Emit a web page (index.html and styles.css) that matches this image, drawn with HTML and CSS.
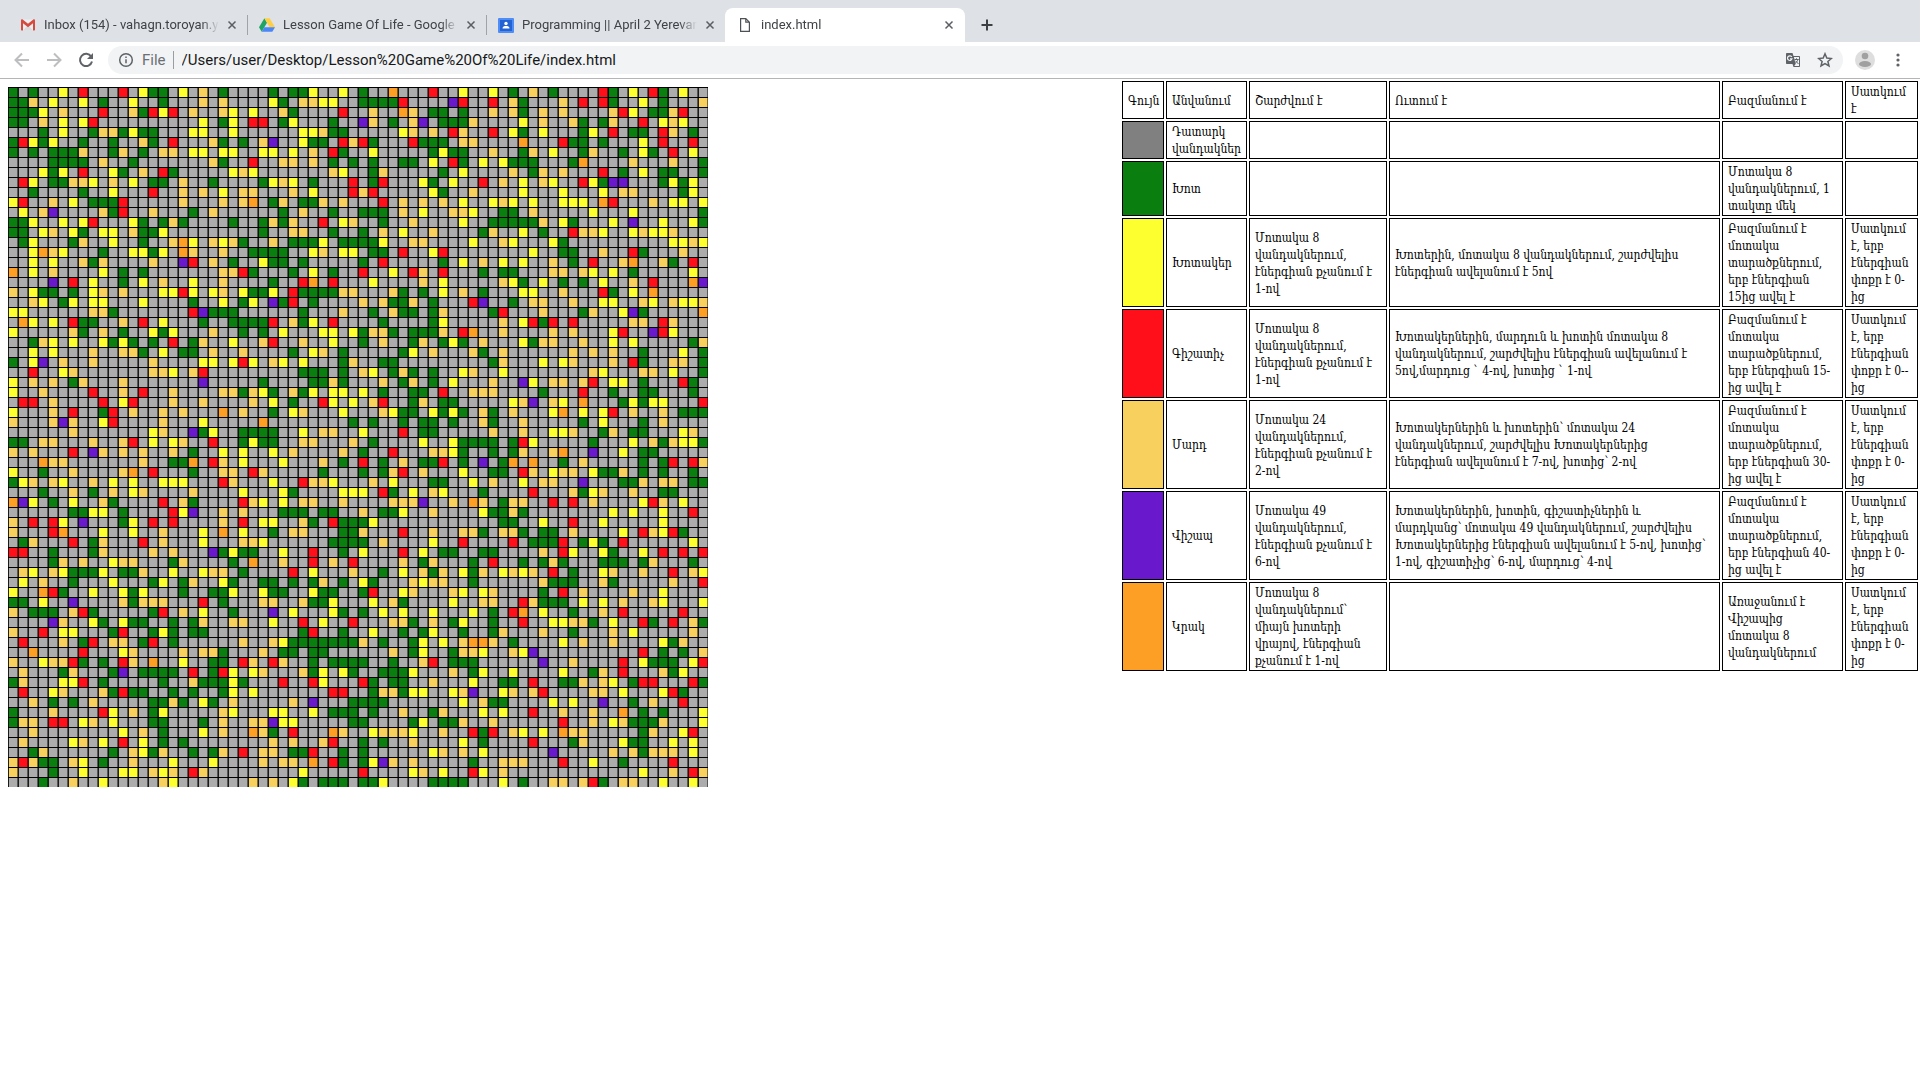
FILE: index.html
```html
<!DOCTYPE html>
<html lang="hy">
<head>
<meta charset="utf-8">
<title>index.html</title>
<link rel="stylesheet" href="styles.css">
</head>
<body>
<header class="browser">
  <nav class="tabs" aria-label="Tabs">
    <div class="tab">
      <svg class="favicon" viewBox="0 0 16 16" aria-hidden="true"><path fill="#eceff1" d="M2 2.500h12v11H2z"/><path fill="#d9dbdd" d="M3 13.500 8 8l5 5.500z"/><path fill="#d54b3d" d="M1 3.500C1 2.500 2 2 3 2.700L8 6.800l5-4.100c1-.7 2-.2 2 .8v9c0 .6-.4 1-1 1h-1V6.200L8 10.200 3 6.200v7.300H2c-.6 0-1-.4-1-1z"/></svg>
      <button class="tab-title" type="button">Inbox (154) - vahagn.toroyan.y@gmail.com</button>
      <button class="close" type="button" aria-label="Close tab"><svg viewBox="0 0 10 10"><path d="m1.500 1.500 7 7m0-7-7 7"/></svg></button>
    </div>
    <div class="tab">
      <svg class="favicon" viewBox="0 0 16 16" aria-hidden="true"><path fill="#1fa463" d="M5.400 1.300 0 10.300l2.700 4.500 5.300-9z"/><path fill="#ffce43" d="M5.400 1.300h5.200l5.400 9h-5.300z"/><path fill="#4a86f5" d="M5.400 10.300H16l-2.700 4.500H2.700z"/></svg>
      <button class="tab-title" type="button">Lesson Game Of Life - Google Drive</button>
      <button class="close" type="button" aria-label="Close tab"><svg viewBox="0 0 10 10"><path d="m1.500 1.500 7 7m0-7-7 7"/></svg></button>
    </div>
    <div class="tab">
      <svg class="favicon" viewBox="0 0 16 16" aria-hidden="true"><rect y="1" width="16" height="15" rx="1" fill="#4f8df6"/><rect x="2" y="3" width="12" height="11" fill="#2362d2"/><circle cx="8" cy="6.500" r="1.700" fill="#fff"/><path fill="#fff" d="M4.500 11.500c0-2 1.700-2.500 3.500-2.500s3.500.5 3.500 2.500z"/></svg>
      <button class="tab-title" type="button">Programming || April 2 Yerevan Group</button>
      <button class="close" type="button" aria-label="Close tab"><svg viewBox="0 0 10 10"><path d="m1.500 1.500 7 7m0-7-7 7"/></svg></button>
    </div>
    <div class="tab active">
      <svg class="favicon" viewBox="0 0 16 16" aria-hidden="true"><path fill="none" stroke="#4d5054" stroke-width="1.200" d="M3.600 1.600h5.200l3.600 3.600v9.200H3.600zM8.800 1.600v3.600h3.600"/></svg>
      <button class="tab-title" type="button">index.html</button>
      <button class="close" type="button" aria-label="Close tab"><svg viewBox="0 0 10 10"><path d="m1.500 1.500 7 7m0-7-7 7"/></svg></button>
    </div>
    <button class="new-tab" type="button" aria-label="New tab"><svg viewBox="0 0 12 12"><path d="M6 .5v11M.5 6h11"/></svg></button>
  </nav>
  <div class="toolbar">
    <button class="tool dim" type="button" aria-label="Back"><svg viewBox="0 0 16 16"><path d="M15 8H2M8 1.500 1.500 8 8 14.500"/></svg></button>
    <button class="tool dim" type="button" aria-label="Forward"><svg viewBox="0 0 16 16"><path d="M1 8h13M8 1.500 14.500 8 8 14.500"/></svg></button>
    <button class="tool" type="button" aria-label="Reload"><svg viewBox="0 0 16 16"><path d="M13.200 4.600A6.100 6.100 0 1 0 14 9.500"/><path class="solid" d="M15 1v6H9z"/></svg></button>
    <div class="omnibox">
      <svg class="info" viewBox="0 0 16 16" aria-hidden="true"><circle cx="8" cy="8" r="6.300"/><path d="M8 7.200v4M8 4.400v1.500"/></svg>
      <label class="scheme" for="address">File</label>
      <input class="address" id="address" type="text" value="/Users/user/Desktop/Lesson%20Game%20Of%20Life/index.html">
      <button class="tool" type="button" aria-label="Translate"><svg viewBox="0 0 16 16"><path class="solid" d="M2 1h5.500l1 3H14c.6 0 1 .4 1 1v9c0 .6-.4 1-1 1H8.500l-1-3H2c-.6 0-1-.4-1-1V2c0-.6.400-1 1-1z"/><path fill="#f1f3f4" stroke="none" d="M8.900 5H14v9H9.300l1.300-2z"/><path stroke="#f1f3f4" stroke-width="1.200" d="M6.800 5A2.300 2.300 0 1 0 7 6.900H5"/><path stroke-width="1" d="M9.500 7.500h4.200M11.500 6.300v1.200M12.900 7.500c-.4 1.700-1.500 2.800-2.700 3.800M10.500 8.800l3 3.200"/></svg></button>
      <button class="tool" type="button" aria-label="Bookmark this page"><svg viewBox="0 0 16 16"><path stroke-width="1.500" d="m8 1.800 1.800 4.300 4.600.4-3.500 3 1.100 4.500-4-2.400L4 14l1.100-4.500-3.500-3 4.600-.4z"/></svg></button>
    </div>
    <button class="avatar" type="button" aria-label="Profile"><svg viewBox="0 0 20 20"><circle cx="10" cy="10" r="10" fill="#dedede"/><circle cx="10" cy="6" r="3.300" fill="#a0a0a0"/><ellipse cx="10" cy="14" rx="6" ry="3" fill="#a0a0a0"/></svg></button>
    <button class="tool" type="button" aria-label="Menu"><svg viewBox="0 0 16 16"><circle class="solid" cx="8" cy="3" r="1.600"/><circle class="solid" cx="8" cy="8" r="1.600"/><circle class="solid" cx="8" cy="13" r="1.600"/></svg></button>
  </div>
</header>
<main class="page">
  <canvas class="field" id="field" width="700" height="700"></canvas>
  <table class="legend">
    <colgroup><col class="c-color"><col class="c-name"><col class="c-move"><col class="c-eat"><col class="c-breed"><col class="c-die"></colgroup>
    <tr><td>Գույն</td><td>Անվանում</td><td>Շարժվում է</td><td>Ուտում է</td><td>Բազմանում է</td><td>Սատկում<br>է</td></tr>
    <tr><td class="empty"></td><td>Դատարկ<br>վանդակներ</td><td></td><td></td><td></td><td></td></tr>
    <tr><td class="grass"></td><td>Խոտ</td><td></td><td></td><td>Մոտակա 8<br>վանդակներում, 1<br>տակտը մեկ</td><td></td></tr>
    <tr><td class="eater"></td><td>Խոտակեր</td><td>Մոտակա 8<br>վանդակներում,<br>էներգիան քչանում է<br>1-ով</td><td>Խոտերին, մոտակա 8 վանդակներում, շարժվելիս<br>էներգիան ավելանում է 5ով</td><td>Բազմանում է<br>մոտակա<br>տարածքներում,<br>երբ էներգիան<br>15ից ավել է</td><td>Սատկում<br>է, երբ<br>էներգիան<br>փոքր է 0-<br>ից</td></tr>
    <tr><td class="predator"></td><td>Գիշատիչ</td><td>Մոտակա 8<br>վանդակներում,<br>էներգիան քչանում է<br>1-ով</td><td>Խոտակերներին, մարդուն և խոտին մոտակա 8<br>վանդակներում, շարժվելիս էներգիան ավելանում է<br>5ով,մարդուց ` 4-ով, խոտից ` 1-ով</td><td>Բազմանում է<br>մոտակա<br>տարածքներում,<br>երբ էներգիան 15-<br>ից ավել է</td><td>Սատկում<br>է, երբ<br>էներգիան<br>փոքր է 0--<br>ից</td></tr>
    <tr><td class="human"></td><td>Մարդ</td><td>Մոտակա 24<br>վանդակներում,<br>էներգիան քչանում է<br>2-ով</td><td>Խոտակերներին և խոտերին՝ մոտակա 24<br>վանդակներում, շարժվելիս Խոտակերներից<br>էներգիան ավելանում է 7-ով, խոտից՝ 2-ով</td><td>Բազմանում է<br>մոտակա<br>տարածքներում,<br>երբ էներգիան 30-<br>ից ավել է</td><td>Սատկում<br>է, երբ<br>էներգիան<br>փոքր է 0-<br>ից</td></tr>
    <tr><td class="dragon"></td><td>Վիշապ</td><td>Մոտակա 49<br>վանդակներում,<br>էներգիան քչանում է<br>6-ով</td><td>Խոտակերներին, խոտին, գիշատիչներին և<br>մարդկանց՝ մոտակա 49 վանդակներում, շարժվելիս<br>Խոտակերներից էներգիան ավելանում է 5-ով, խոտից՝<br>1-ով, գիշատիչից՝ 6-ով, մարդուց՝ 4-ով</td><td>Բազմանում է<br>մոտակա<br>տարածքներում,<br>երբ էներգիան 40-<br>ից ավել է</td><td>Սատկում<br>է, երբ<br>էներգիան<br>փոքր է 0-<br>ից</td></tr>
    <tr><td class="fire"></td><td>Կրակ</td><td>Մոտակա 8<br>վանդակներում՝<br>միայն խոտերի<br>վրայով, էներգիան<br>քչանում է 1-ով</td><td></td><td>Առաջանում է<br>Վիշապից<br>մոտակա 8<br>վանդակներում</td><td>Սատկում<br>է, երբ<br>էներգիան<br>փոքր է 0-<br>ից</td></tr>
  </table>
</main>
<script src="field.js"></script>
</body>
</html>
```
FILE: styles.css
```css
* { box-sizing: border-box; }

body {
  margin: 0;
  background: #fff;
  color: #000;
  font-family: "DejaVu Serif Condensed", "DejaVu Serif", serif;
}

button {
  margin: 0;
  padding: 0;
  border: 0;
  background: none;
  font: inherit;
  color: inherit;
}

svg { display: block; }

.browser {
  font-family: Roboto, "Liberation Sans", sans-serif;
  border-bottom: 1px solid #b6b4b6;
}

.tabs {
  display: flex;
  align-items: flex-end;
  height: 42px;
  padding-left: 8px;
  background: #dee1e6;
}

.tab {
  position: relative;
  display: flex;
  align-items: center;
  width: 239px;
  height: 34px;
  padding: 0 10px 0 12px;
  gap: 8px;
  color: #3f4246;
  font-size: 13px;
}

.tab + .tab::before {
  content: "";
  position: absolute;
  left: 0;
  top: 7px;
  width: 1px;
  height: 20px;
  background: #a0a3a8;
}

.tab.active {
  width: 240px;
  padding-right: 11px;
  background: #fff;
  border-radius: 8px 8px 0 0;
}

.tab.active::before { display: none; }

.favicon {
  flex: none;
  width: 16px;
  height: 16px;
}

.tab-title {
  flex: 1;
  min-width: 0;
  overflow: hidden;
  white-space: nowrap;
  text-align: left;
  line-height: 18px;
  -webkit-mask-image: linear-gradient(to right, #000 90%, transparent);
  mask-image: linear-gradient(to right, #000 90%, transparent);
}

.close svg {
  width: 10px;
  height: 10px;
  fill: none;
  stroke: #5b5e63;
  stroke-width: 1.500;
}

.new-tab {
  align-self: flex-end;
  margin: 0 0 11px 16px;
}

.new-tab svg {
  width: 12px;
  height: 12px;
  stroke: #3c4043;
  stroke-width: 2;
}

.toolbar {
  display: flex;
  align-items: center;
  height: 36px;
  padding: 0 14px;
  gap: 16px;
  background: #fff;
}

.tool svg {
  width: 16px;
  height: 16px;
  fill: none;
  stroke: #5f6368;
  stroke-width: 2;
}

.tool .solid {
  fill: #5f6368;
  stroke: none;
}

.tool.dim svg { stroke: #bdbec0; }

.omnibox {
  flex: 1;
  display: flex;
  align-items: center;
  height: 28px;
  margin-left: -2px;
  padding: 0 10px;
  border-radius: 14px;
  background: #f1f3f4;
}

.omnibox .tool + .tool { margin-left: 16px; }

.info {
  width: 16px;
  height: 16px;
  fill: none;
  stroke: #5f6368;
  stroke-width: 1.500;
}

.scheme {
  margin: 0 7px 0 8px;
  color: #6b6f74;
  font-size: 15px;
  line-height: 20px;
}

.address {
  flex: 1;
  min-width: 0;
  height: 18px;
  padding: 0 0 0 8px;
  border: 0;
  border-left: 1px solid #9a9da1;
  outline: 0;
  background: none;
  color: #17181a;
  font: 15px/18px Roboto, "Liberation Sans", sans-serif;
}

.avatar svg {
  width: 20px;
  height: 20px;
}

.avatar { margin: 0 -1px 0 -4px; }

.page {
  display: flex;
  justify-content: space-between;
  align-items: flex-start;
}

.field {
  flex: none;
  margin: 8px;
}

.legend {
  flex: none;
  width: 800px;
  table-layout: fixed;
  border-collapse: separate;
  border-spacing: 2px;
  font-size: 12px;
  line-height: 17px;
}

.legend td {
  height: 38px;
  padding: 2px 0 0 5px;
  border: 1px solid #000;
  vertical-align: middle;
  white-space: nowrap;
}

.c-color { width: 42px; }
.c-name { width: 81px; }
.c-move { width: 138px; }
.c-eat { width: 331px; }
.c-breed { width: 121px; }
.c-die { width: 73px; }

.empty { background: #808080; }
.grass { background: #0a7f0f; }
.eater { background: #fdff2e; }
.predator { background: #fe0f1a; }
.human { background: #f8d05d; }
.dragon { background: #6918cc; }
.fire { background: #fd9f24; }
```
FILE: field.js
```js
// Occupied cells, one string per row: kind + column, left half | right half.
const HALF = 35;
const CELL = 10;
const rows = [
"g0 g2 y5 r7 r11 y13 g14 g15 y17 m19 g21 g26 g28 g29 y30 y33|g0 o3 r7 y10 y13 g15 m17 g19 r24 g25 y27 r29 g30 y32",
"g0 g1 m2 y4 y7 g9 y12 g15 m19 m21 y26 g27 m29 m30 y31 y32|g0 g1 g2 g3 r4 v9 r10 r13 m15 g16 m20 r22 r24 g25 y28 g30 m34",
"g0 g1 g2 y3 m5 r9 m12 g13 r14 y15 r16 m18 m21 y22 y24 m27 g28 r33|m1 o4 m5 g7 g8 g10 m13 m15 g16 m18 m20 m25 r26 y27 g29 g30 m31 r32",
"g0 g1 m3 y5 y7 r8 y19 g21 y22 r24 r25 g27 y28 g32|v0 m1 g3 m5 v6 g8 g9 g10 m11 y16 m18 m21 g22 g24 m25 r28 y30 m31 y32",
"g3 y5 g8 m9 m10 g11 y12 g13 g14 y18 y19 y22 y29 y30 m31 g32 g33|y4 m5 m7 r9 m10 r13 y15 g16 y18 g22 y23 r25 g27 g28 r30 m31 g33",
"g0 r1 y2 g3 y4 g7 g10 m13 g14 r16 m20 g21 g23 m25 v26 y29 g30 g31 r33 m34|r0 g1 r5 g6 g7 g8 m10 m11 o16 r20 g21 g22 g24 y28 r30 r33",
"g0 g2 g4 g5 g6 m7 g10 m11 g13 m15 m16 y18 y19 y21 y22 y25 y26 y28 m30 r32 g33|y1 g7 y8 g9 g10 m13 g16 m17 y19 g22 m23 g26 y28 g29 r31 y33",
"g4 g5 g6 g7 m9 g12 m20 g21 r24 m27 m28 m30 g32 g34|g1 g4 g5 y7 r9 g10 y12 y14 g15 g16 g17 g21 o22 m27 m31 g34",
"y3 g4 y5 r7 y10 g11 m13 r15 g16 y22 m23 y24 m32 y33|g1 m2 g8 y10 m15 g17 m18 m20 r24 g26 y28 g30 g31 g34",
"r1 y2 g4 g5 m6 m7 y8 m10 y12 g14 g15 m17 g20 g25 y26 m27 y28 g30 r34|g1 r2 y6 g7 y9 r12 m14 y16 m18 y19 r22 y23 g24 v25 v26 g30 y31 g32 y33",
"g2 g7 y10 r14 m17 m19 y21 m23 m24 m28 y30 r34|m0 r1 y7 g8 m11 y16 y20 y24 m26 m27 g32 y33",
"y0 r1 m4 y6 g8 g9 g10 r11 m17 m21 m23 o24 g26 m27 g29 g30 m31 m33|r2 m4 m6 m8 y10 y13 m14 y15 y17 y20 y21 y22 o24 r25 m29 y31 y32 y34",
"y1 m3 v4 m9 g10 r11 m14 g18 m20 g27 m29 g32|g0 g1 g2 m4 y6 m9 m10 y11 g14 g15 m17 y23 y27 g34",
"g0 g1 y2 y5 y7 r8 y12 g13 g15 m16 g17 g22 g25 m26 g27 m28 r31 y33 m34|g2 m5 y10 g13 g14 g15 g16 g17 m18 y20 g21 y25 v27 y30 y33 g34",
"g0 g1 y3 m4 y6 g7 y9 y10 m12 g13 g14 y15 g25 m28 m29 g32|g0 m2 y4 m7 g12 m13 y16 g18 r21 m22 m23 y24 y27 m28 y29 y30 m31",
"g1 y2 g6 m7 y10 g13 m16 o17 y18 m20 y21 m22 g23 m26 g28 g29 g30 y31 g33 g34|g0 g1 y2 m5 m6 y11 m14 y15 y19 g20 y31 y32 m33 y34",
"y2 o3 m4 y5 g9 y12 y13 g14 y15 o17 m18 m21 g24 g25 g26 g27 y30 m31 y33 y34|g1 g2 r4 y7 r8 y17 g20 g21 m24 r27 g28 m32",
"y2 y4 m7 g8 m9 m14 v17 r18 m20 g22 y25 g26 g27 g29|g0 r2 g8 y10 m12 y14 y16 m19 g21 r23 m26 o27 m30 g31 r33",
"o0 y2 m4 y9 g11 g13 m21 m22 r23 g24 g28 y30 g32|r0 y3 r5 m6 r8 g12 g14 g15 m19 m20 m22 y23 y25 g27 y33",
"v4 r6 y8 g11 y13 m15 y18 m21 g26 r29 o30 r32|y1 m6 y8 m14 y15 g16 y18 g20 g22 y24 m27 r29 o33 v34",
"m0 y2 g3 g4 g6 y8 m9 m11 y15 y16 r17 y18 y20 m21 y23 g24 g25 y26 r28 g29 g30 g31 g32 m33 m34|m3 g4 g6 y8 m10 g12 y16 y17 m20 r24 g25 y27 o29",
"m2 y3 g5 y6 y8 y9 y13 g18 y21 g23 y24 v26 g27 r28 g30|m0 m2 g3 g4 m5 g7 r11 v12 g15 m17 m18 m21 y24 y25 m28 y29 m31 y32 y33 m34",
"y0 y1 m8 m9 g10 r18 v19 g20 g21 g22 g29 m33|g1 m3 g4 g5 g7 m8 g13 r14 m18 g22 m23 y26 v27 g28 o34",
"o1 y2 y4 r6 g7 g8 m11 r13 y15 g19 g22 g23 g24 g25 r26 m28 g29 y30 r32|g2 g7 y8 m14 y16 r17 g18 r19 r21 m27 m28 r30 m31",
"y0 m6 g7 m9 g11 y14 g15 y16 m20 g23 g25 y27 y31 y32 y34|g0 m1 m2 g3 g5 g6 g7 m8 r10 o11 m14 m19 m21 y25 r26 v29 r30 y31",
"g2 m3 y4 y6 y9 g10 y11 g12 g14 r16 g18 m19 y22 m25 r26 m29 y32|g0 m2 g5 m6 g8 y9 g10 m12 y16 g17 m18 m19 m22 y25 y27 g33 m34",
"y2 y4 m8 m11 m12 g13 y15 g17 g18 m20 m23 g28 y30 m31 g33|g4 y5 m7 m11 g12 m14 m21 m23 m25 g28 y32 g34",
"g0 y2 v3 m5 m8 m14 y19 y20 y22 r23 y24 m26 y27 y29 g33 m34|g2 g3 g13 m14 y18 y20 m21 m25 r27 g28 m31 m32 g34",
"r2 y5 m6 m14 m15 y16 m18 r19 g29 g30 g31 g33|m0 y1 g3 m4 g5 g7 y10 m11 y14 m23 y24 m28 m29 y31 g34",
"y0 m2 m4 g6 m7 m11 v19 g25 g30 g31 m32 g33|m2 g4 m5 g7 y9 m13 v16 y17 m19 m20 m22 r23 y25 y26 g28 r32 g33",
"y0 m3 r8 m11 r13 m16 m21 m22 g23 m24 y25 g26 m28 g29 y30 y32 y33|y0 g2 g5 g6 r8 m11 m12 m13 g18 r22 g25 g28 g29 g33",
"r1 r2 m4 r9 y11 r12 m16 m19 m24 y26 g28 r31 y32 y34|m1 r2 g5 m6 g8 g9 y15 m16 v17 m19 y20 o22 g26 y27 g28 y29 y30 r34",
"y0 m4 r6 g9 r10 m12 m15 m17 o21 m23 g26 y28 m29 y33|m2 y3 g4 g5 y7 g8 y9 g10 m12 g13 m15 y19 o20 y22 y24 r25 m27 m30 g32 g33 g34",
"m0 m4 v5 m6 y9 r10 m15 y19 o25 g34|g1 g4 g6 g7 g9 m12 g13 m16 g22 y24 g28 m30",
"m6 y14 m15 v18 g19 y20 g23 g24 g25 g26 y29 m31 m32|y0 r4 g6 g7 m13 m16 y19 y20 m21 g24 m25 g27 g28 y32 m33",
"g0 g1 m3 m4 m8 m11 r12 y14 y16 m17 r20 g23 y24 g25 g26 m29 m30 m34|g1 y6 y9 g10 g11 g12 g13 g15 r16 y17 g23 y27 m29 g30 m31 y32 y33 g34",
"m0 m2 r6 v8 m9 m11 m13 m16 g18 y21 y23 y26 m28 m33|g0 r3 m7 m8 y9 g10 g13 g15 m16 m19 o20 v23 y26 g28 g29",
"o3 m4 m5 m13 g16 g17 o18 r20 m21 y23 y27 m31 g33|r0 g2 m4 g6 g7 r8 g10 v12 g14 o15 o17 g20 m22 g28 g30 r31 r33 m34",
"y0 g3 m6 m11 o12 r14 g18 m21 m22 r24 m25 g31|g0 g2 m3 r4 m6 y10 g13 g14 r16 m17 y19 m20 m21 y23 g24 g25 m26 g28 g30 g33",
"g0 y1 m2 m4 y5 m8 y10 y12 y15 y16 y17 r21 m22 y26 r29 m30 m31 y32|m1 y3 g7 g8 y11 m13 y16 m18 m19 v22 g26 g27 m28 m30 m31 g33 g34",
"g3 m6 g8 m10 y12 m13 m18 y23 y27 g28 y33 y34|y0 r2 g3 y5 m7 y8 g12 r17 m21 g22 y23 m24 m27 g30 g31",
"o0 v1 y2 g4 y6 m9 g10 r15 m17 g18 r23 m24 y25 y27 m29 m30 m33|m3 m4 m5 v6 m9 o11 m12 g14 m15 m16 r19 r21 m23 y28 r29 m30 y32",
"g6 g7 y8 y9 g11 r16 y17 v18 m21 m23 g27 g28 g29 g31 g32|m0 g2 g3 y4 m7 y12 g13 g14 m15 g16 y25 y27 y30 r33",
"m0 r2 r4 y5 v7 g11 y12 r14 r16 m21 r23 y25 y26 m29 g30 r32 g33 g34|g0 y1 g14 g15 y18 r21 y24 y30",
"m0 r4 o5 y9 y12 m15 y19 o21 y23 g26 m28 m29 g33 g34|m0 r4 m7 m10 m11 g12 m14 m15 g16 g18 g19 m21 y26 r28 m29 y30 r31 g32",
"g1 m2 r6 g8 m9 r13 m15 y19 m23 m24 y25 g32 g33 g34|g0 m2 y7 r10 r15 g17 g18 g19 r20 g22 y23 g24 r26 y33",
"r0 r1 g4 g8 m9 m14 m16 v20 g21 y22 g23 g24 y27 r30 g33|y0 r4 y6 g8 g9 g12 g13 m18 r20 y21 y24 g25 y28 r30 r32 r34",
"g4 m5 m7 y10 m11 m12 g16 m17 g22 o24 m27 r30 m32 r34|m4 g6 m7 g11 r13 g16 g18 m19 g20 g24 g25 g26 g28 m29 g33",
"m1 y2 m4 y5 g6 g7 g8 y9 g11 g12 m13 y16 y19 m20 m21 g23 r28 y30 m34|g2 y4 m6 g7 m8 y10 g11 m12 y14 m15 y16 m17 r19 g21 y24 m25 m28 r31 m33 y34",
"y1 m3 g6 y10 g14 y15 g17 m18 y21 g22 g25 g26 g28 g30 m31 g33|y0 g1 m5 y6 m7 m8 g11 m18 g19 g20 g21 m24 g25 m31 r34",
"y0 o3 r4 g5 y8 y11 g12 y13 g17 g20 g21 y22 y25 g26 g27 y30 g31 g32|g0 r1 y4 m5 m9 y10 y12 m13 g18 r20 m22 m27 y30",
"g0 g1 y3 v6 m11 g12 m13 m14 m15 r19 g21 m25 m26 m29 g30 g31 y32|y1 m3 g4 y9 m12 m13 r16 m17 g18 g19 g20 y22 y24 m26 m29 y30 y34",
"m0 g2 g3 g4 m6 r7 g8 g14 r15 m17 y19 g22 v26 y28 y32 g33|g0 y2 y4 y7 y11 g13 r15 o16 y18 g21 m24 r26 r32",
"v4 m5 y8 g9 y11 g12 g13 g16 g18 m19 m22 m23 y26 r29 y31 r34|m3 m4 g5 m7 g9 y10 g13 r16 y19 y20 m21 m22 g23 y25 r28 g29 r31 m33 g34",
"m0 r3 y5 y6 g10 r11 g14 y15 g16 g18 g19 g29 r30 g33|y1 g4 g6 y7 g10 g13 m14 m18 g21 m25 y27 m33",
"r1 m5 g7 r8 m10 m11 g13 r14 g16 m23 m26 y27 g28 g29 g30 g31 g32 g33 g34|m0 g2 g5 y6 y8 m10 o11 o12 m13 g15 y20 m22 m25 y30 g31 m32",
"o2 r7 y11 m12 m17 m19 m20 g21 m25 g27 g28 g30 g31|m3 g5 y6 g9 m10 m11 y12 m15 y16 v17 r28 g30 g32 m34",
"m0 y3 m4 m5 r6 g7 g9 r11 m12 o14 y17 g20 g21 r23 m24 r26 m27 g30 g32 g33 g34|g0 g3 m6 r7 g9 g10 g11 v18 m21 r26 y28 g29 g30 g31 y33 r34",
"m1 g5 m6 g10 v11 g13 g14 g15 g16 r18 g20 r21 y22 y24 m25 m29 g30 y31 y33 g34|g2 g3 g4 y5 m9 g11 y12 y15 y20 g23 m24 r26 m30 g31 y32",
"g0 m1 y5 y6 r7 g9 g15 m18 g19 g20 g21 y22 g23 r27 r30 y31|r0 g1 g3 g4 m7 y11 g14 g15 r17 g20 g21 m22 m24 y25 g27 r28 r29 r33 g34",
"r1 y4 m5 m9 g10 r11 g12 g13 g16 g18 g21 y22 y24 r32 r33|g1 m2 m3 g4 y5 y6 y9 m10 v11 y14 m15 m17 r18 m23 m24 y26 y30 r31 g32",
"m2 g4 g6 m8 g14 g15 m16 g17 y19 g20 m22 m28 v30 g34|g0 g1 g2 y10 m12 g13 g14 y19 y21 v24 g27 m29 r32",
"g0 m4 r9 y10 m12 g14 y15 m21 y22 y26 y27 y30 g32 g33 g34|g1 m4 g7 m8 y12 y14 r17 m20 m23 o26 g28 g30 y34",
"g0 m1 m2 r4 r5 y7 m8 y10 g14 g15 g19 m21 m24 m25 v26 y27 y28 g34|g0 g5 y6 g8 g9 m10 m13 r20 m23 y25 m26 g27 g28 g29 m30 y34",
"m2 y11 m13 g15 y19 m21 o24 m25 g26 r28 o32 m33|y1 m2 m3 m4 y5 m8 r11 g12 r13 m15 y16 y18 o20 m21 m22 g28 m29 y32 r33",
"m1 y6 m7 y9 r11 y13 g15 g17 m26 m28 m31 r32|g0 g2 m5 y10 g12 r17 g21 m22 y26 g27 g28 y31 y33",
"g2 m3 g10 m12 y13 g14 m15 g18 g20 m21 r23 m25 m26 g28 g29 r30 g33|g0 y7 m8 m10 y12 v19 m25 m27 g28 m29 m30 m31 y33",
"m0 r1 m2 g3 g4 m6 y7 g9 m12 y16 y20 m25 m27 m28 o30 r32 g33|g0 y1 v2 m3 m5 g11 m14 m15 m16 r20 y23 g26 r31",
"m0 g4 y7 y11 y12 m14 y15 m16 r18 m19 y29|r0 y5 m6 y8 r11 y12 m14 y28 m31 r33 m34",
"g3 m6 y9 m15 y16 m24 m26 y28 g29 g31 g32 g33|g0 g1 y2 g7 g8 g9 g10 y14 g16 m19 m20 m22 r23 g24 m26 m27 y30 y33"
];
const colors = {
  g: "#0a7f0f", y: "#fdff2e", r: "#fe0f1a",
  m: "#f8d05d", v: "#6918cc", o: "#fd9f24"
};
const ctx = document.getElementById("field").getContext("2d");
ctx.fillStyle = "#acacac";
ctx.fillRect(0, 0, 700, 700);
rows.forEach((row, y) => {
  row.split("|").forEach((half, side) => {
    half.split(" ").forEach((cell) => {
      ctx.fillStyle = colors[cell[0]];
      ctx.fillRect((Number(cell.slice(1)) + side * HALF) * CELL, y * CELL, CELL, CELL);
    });
  });
});
// Grid lines: vertical lines carry a soft edge on their left side.
for (let i = 0; i < 70; i++) {
  ctx.fillStyle = "rgba(0, 0, 0, 0.5)";
  ctx.fillRect(i * CELL + 9, 0, 1, 700);
  ctx.fillStyle = "rgba(0, 0, 0, 0.85)";
  ctx.fillRect(i * CELL, 0, 1, 700);
  ctx.fillStyle = "#000";
  ctx.fillRect(0, i * CELL, 700, 1);
}
```
